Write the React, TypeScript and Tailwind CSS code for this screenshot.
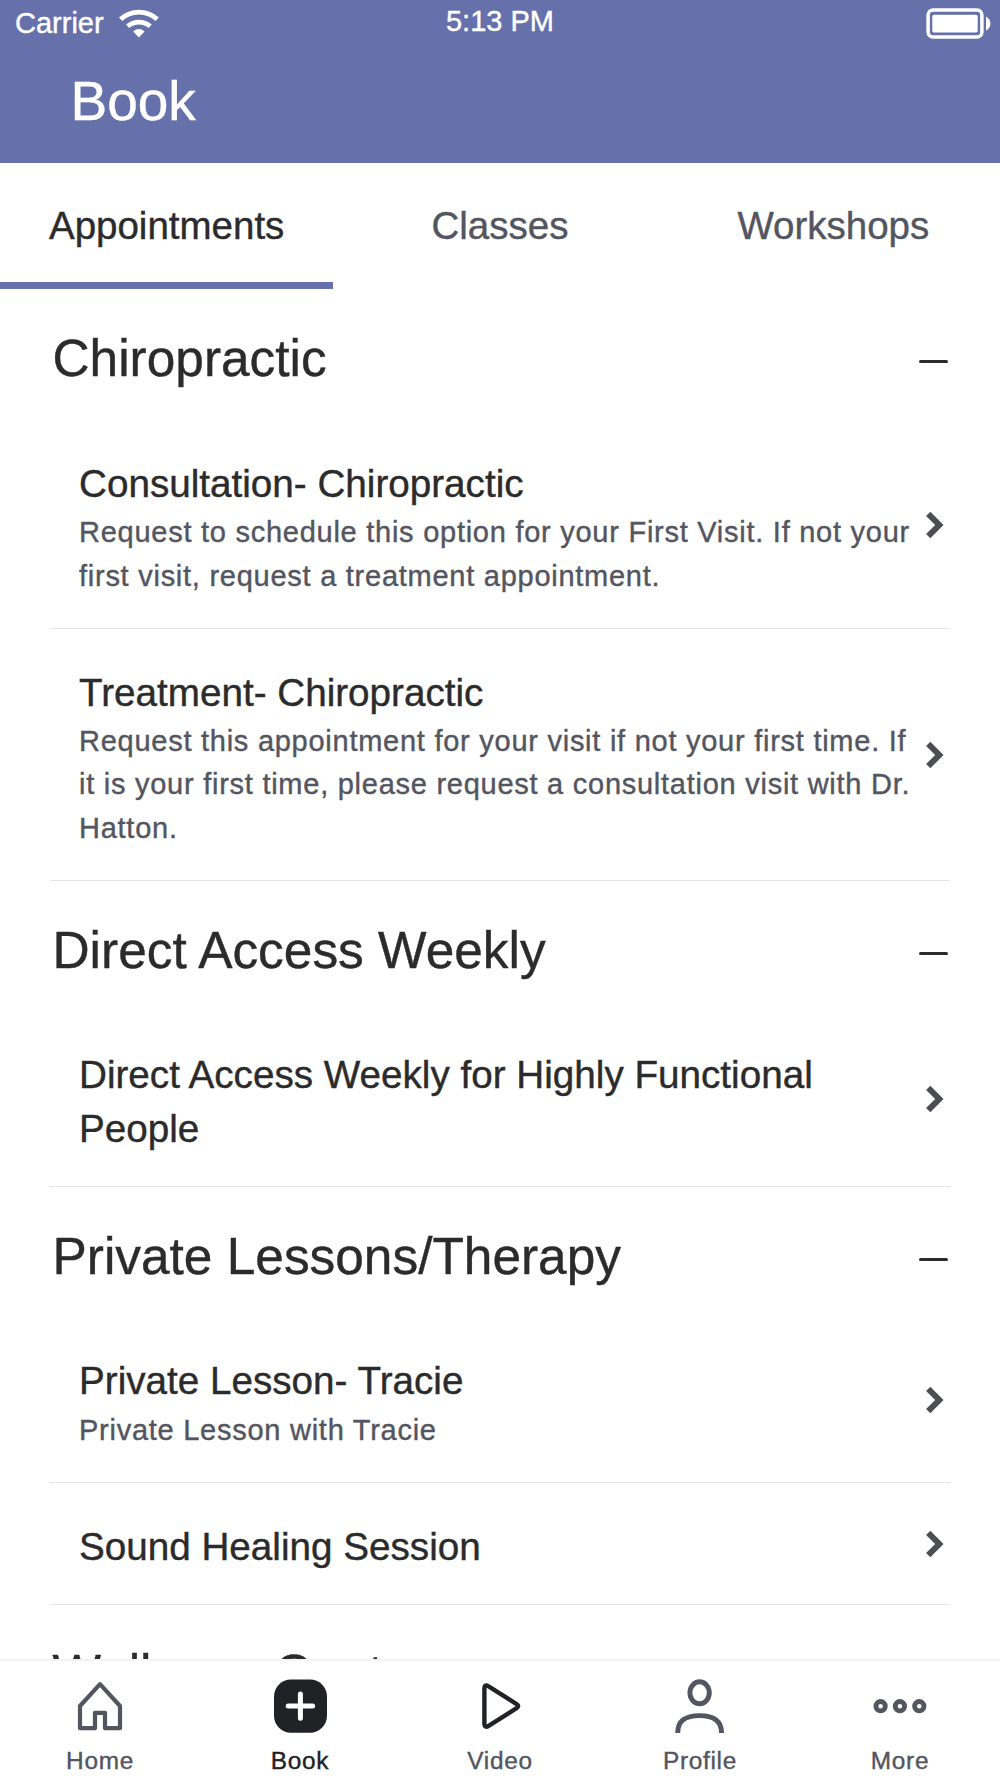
import { useState } from "react";

const tabs = ["Appointments", "Classes", "Workshops"];

const sections = [
  {
    name: "Chiropractic",
    items: [
      {
        title: "Consultation- Chiropractic",
        description:
          "Request to schedule this option for your First Visit. If not your first visit, request a treatment appointment.",
      },
      {
        title: "Treatment- Chiropractic",
        description:
          "Request this appointment for your visit if not your first time. If it is your first time, please request a consultation visit with Dr. Hatton.",
      },
    ],
  },
  {
    name: "Direct Access Weekly",
    items: [{ title: "Direct Access Weekly for Highly Functional People", description: "" }],
  },
  {
    name: "Private Lessons/Therapy",
    items: [
      { title: "Private Lesson- Tracie", description: "Private Lesson with Tracie" },
      { title: "Sound Healing Session", description: "" },
    ],
  },
  { name: "Wellness Center", items: [] },
];

const navigation = [
  { name: "Home", icon: HomeIcon },
  { name: "Book", icon: BookIcon },
  { name: "Video", icon: VideoIcon },
  { name: "Profile", icon: ProfileIcon },
  { name: "More", icon: MoreIcon },
];

function WifiIcon() {
  return (
    <svg width="42" height="30" viewBox="0 0 42 30" fill="none" stroke="currentColor" aria-hidden="true">
      <path d="M2.6 11.2A27 27 0 0 1 39.2 11.2" strokeWidth="4.8" />
      <path d="M9.6 18.3A17.3 17.3 0 0 1 32.2 18.3" strokeWidth="4.8" />
      <path d="M20.9 29.4L15.2 23.4Q20.9 18.6 26.6 23.4Z" fill="currentColor" stroke="none" />
    </svg>
  );
}

function BatteryIcon() {
  return (
    <svg width="66" height="32" viewBox="0 0 66 32" fill="none" aria-hidden="true">
      <rect x="2.1" y="2.1" width="53.8" height="27" rx="5" stroke="currentColor" strokeWidth="3.5" />
      <rect x="6.3" y="6.7" width="45.4" height="17.8" rx="1.8" fill="currentColor" />
      <path d="M60 8.4Q64.4 11 64.4 15.6T60 22.8Z" fill="currentColor" />
    </svg>
  );
}

function ChevronIcon() {
  return (
    <svg className="-mt-[5px] shrink-0 text-[#4d4e51]" width="19" height="28" viewBox="0 0 19 28" fill="none" aria-hidden="true">
      <path d="M3.2 2.8L14.3 14L3.2 25.2" stroke="currentColor" strokeWidth="6" />
    </svg>
  );
}

function HomeIcon() {
  return (
    <svg width="54" height="54" viewBox="0 0 54 54" fill="none" aria-hidden="true">
      <path
        d="M27 5.2L7 27V49.2H22V33.8H32V49.2H47V27Z"
        stroke="currentColor"
        strokeWidth="4.2"
        strokeLinejoin="round"
      />
    </svg>
  );
}

function BookIcon() {
  return (
    <svg width="54" height="54" viewBox="0 0 54 54" fill="none" aria-hidden="true">
      <rect x="1" y="0.4" width="53" height="53.4" rx="17" fill="#212226" />
      <path d="M15.2 27.1H39.6M27.4 14.9V39.3" stroke="white" strokeWidth="5" strokeLinecap="round" />
    </svg>
  );
}

function VideoIcon() {
  return (
    <svg className="text-[#212226]" width="54" height="54" viewBox="0 0 54 54" fill="none" aria-hidden="true">
      <path
        d="M11.4 9V45.2C11.4 47.7 13.2 48.5 15.2 47.1L43.6 29.1C45.7 27.7 45.7 26.5 43.6 25.1L15.2 7.1C13.2 5.7 11.4 6.5 11.4 9Z"
        stroke="currentColor"
        strokeWidth="4.4"
        strokeLinejoin="round"
      />
    </svg>
  );
}

function ProfileIcon() {
  return (
    <svg width="54" height="54" viewBox="0 0 54 54" fill="none" stroke="currentColor" strokeWidth="4.9" aria-hidden="true">
      <ellipse cx="26.6" cy="13.8" rx="9.7" ry="11" />
      <path d="M4.7 54C4.7 42 12 36.6 26.6 36.6S48.6 42 48.6 54" />
    </svg>
  );
}

function MoreIcon() {
  return (
    <svg width="54" height="54" viewBox="0 0 54 54" fill="none" stroke="currentColor" strokeWidth="4.8" aria-hidden="true">
      <circle cx="7.6" cy="27.2" r="4.7" />
      <circle cx="26.9" cy="27.2" r="4.7" />
      <circle cx="46.3" cy="27.2" r="4.7" />
    </svg>
  );
}

export default function App() {
  const [activeTab, setActiveTab] = useState("Appointments");

  return (
    <div className="flex h-screen flex-col overflow-hidden bg-white font-['Liberation_Sans',Arial,sans-serif] text-[#2b2b2b] [-webkit-text-stroke:0.4px]">
      <header className="h-[163.3px] shrink-0 bg-[#6671ac] text-white">
        <div className="grid h-[45px] grid-cols-3 items-center text-[29px] leading-none">
          <div className="flex items-center gap-3.5 pl-[15px]">
            <span className="pt-px">Carrier</span>
            <WifiIcon />
          </div>
          <span className="pb-0.5 text-center">5:13 PM</span>
          <div className="flex justify-end pr-2 pt-0.5">
            <BatteryIcon />
          </div>
        </div>
        <h1 className="pl-[70.5px] pt-6 text-[55px] leading-[64px]">Book</h1>
      </header>

      <nav className="grid h-[126.4px] shrink-0 grid-cols-3">
        {tabs.map((tab) => (
          <button
            key={tab}
            type="button"
            onClick={() => setActiveTab(tab)}
            className={
              tab === activeTab
                ? "flex flex-col justify-between text-[38.5px] text-[#2b2b2b]"
                : "flex flex-col justify-between text-[38.5px] text-[#53555f]"
            }
          >
            <span className="w-full pt-[39px] text-center leading-[48px]">{tab}</span>
            {tab === activeTab && <span className="mb-[0.6px] h-[7px] w-full bg-[#6671ac]" />}
          </button>
        ))}
      </nav>

      <main className="min-h-0 flex-1 overflow-hidden px-[50px]">
        {sections.map((section) => (
          <section key={section.name}>
            <div className="flex h-[130.67px] items-start justify-between pl-[2.5px] pr-[2.5px] pt-[38.6px]">
              <h2 className="text-[51.4px] leading-[60px]">{section.name}</h2>
              <span className="mt-8 h-[3px] w-[29px] rounded-full bg-[#2b2b2b]" />
            </div>
            {section.items.map((item) => (
              <a
                key={item.title}
                href="#"
                className="flex items-center border-b border-[#e4e4e5] pb-[30.87px] pl-[29px] pr-[6.5px] pt-[36.8px]"
              >
                <div className="w-[845.5px] pr-2">
                  <h3 className="text-[38.65px] leading-[53.33px]">{item.title}</h3>
                  {item.description && (
                    <p className="-mb-px pt-px text-[29px] leading-[43.33px] tracking-[0.74px] text-[#53555f]">
                      {item.description}
                    </p>
                  )}
                </div>
                <ChevronIcon />
              </a>
            ))}
          </section>
        ))}
      </main>

      <footer className="grid h-[119px] shrink-0 grid-cols-5 border-t-2 border-[#f4f4f5] bg-white">
        {navigation.map((item) => (
          <a
            key={item.name}
            href="#"
            className={
              item.name === "Book"
                ? "flex flex-col items-center pt-[18px] text-[#212226]"
                : "flex flex-col items-center pt-[18px] text-[#53555f]"
            }
          >
            <item.icon />
            <span className="mt-3 text-[24.4px] leading-[32px] tracking-[0.7px]">{item.name}</span>
          </a>
        ))}
      </footer>
    </div>
  );
}
